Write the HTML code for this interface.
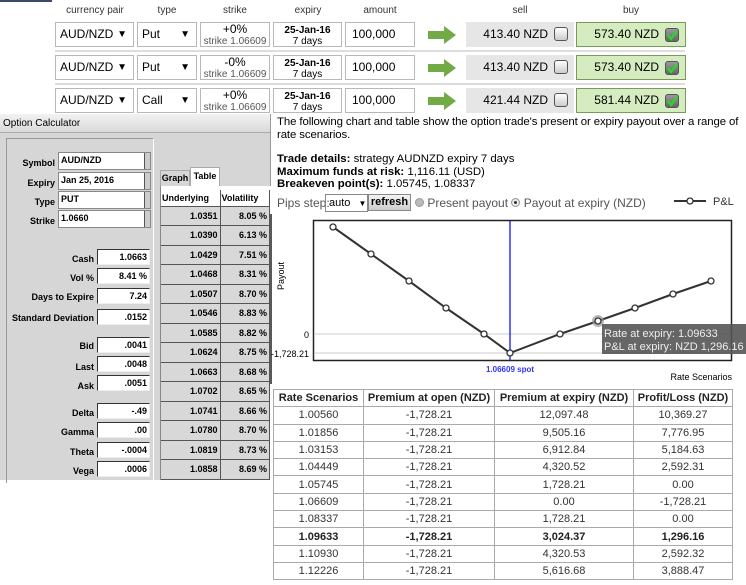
<!DOCTYPE html>
<html><head><meta charset="utf-8"><style>
*{margin:0;padding:0;box-sizing:border-box}
body{width:746px;height:585px;position:relative;background:#fff;font-family:"Liberation Sans",Arial,sans-serif;overflow:hidden;color:#000}
.a{position:absolute}
.hd{font-size:10px;color:#333;top:5px;text-align:center}
.box{position:absolute;border:1px solid #b8b8b8;background:#fff;height:25px}
.sel{font-size:12px;line-height:23px;padding-left:4px}
.sel b{position:absolute;right:6px;font-size:10px;font-weight:normal}
.st{text-align:center;font-size:12px;line-height:11px;padding-top:1px}
.st small{font-size:10px;color:#555}
.ex{text-align:center;font-size:10px;line-height:11px;padding-top:2px}
.ex b{font-size:10px}
.amt{font-size:12px;line-height:23px;padding-left:6px}
.sell{position:absolute;background:#e6e6e6;height:25px;font-size:12px;line-height:25px;text-align:right;padding-right:26px}
.buy{position:absolute;background:#d5ecc0;border:1px solid #7a9a5a;height:25px;font-size:12px;line-height:23px;text-align:right;padding-right:26px}
.cb{position:absolute;right:6px;top:5px;width:14px;height:14px;border:1px solid #555;border-radius:3px;background:linear-gradient(#fff,#ccc)}
.sep{position:absolute;left:55px;width:630px;height:2px;background:#ddd}
.calc{font-family:"Liberation Sans",Arial,sans-serif;font-weight:bold;font-size:9px}
.lab{position:absolute;text-align:right;font-weight:bold;font-size:9px}
.fld{position:absolute;background:#fff;border:1px solid #333;border-right-color:#eee;border-bottom-color:#eee;font-size:9px;font-weight:bold;text-align:right;padding-right:2px;height:16px;line-height:14px}
.dd{position:absolute;background:#fff;border:1px solid #888;font-size:9px;font-weight:bold;padding-left:2px;height:18px;line-height:14px}
.dd i{position:absolute;right:0;top:0;width:6px;height:16px;background:#ccc;border-left:1px solid #555}
table.g{border-collapse:collapse;position:absolute;left:161px;top:190px;width:109px;font-size:9px;font-weight:bold}
table.g td{height:19.5px;border-bottom:1px solid #555;border-right:1px solid #555;text-align:right;padding-right:2px;background:#d8d8d8}
table.g tr:first-child td{background:#fff;text-align:left;height:16px;padding-left:1px}
table.r{border-collapse:collapse;position:absolute;left:273px;top:389px;width:460px;font-size:11px;color:#333}
table.r td{border:1px solid #aaa;text-align:center;height:17.3px;padding:0}
table.r tr:first-child td{font-weight:bold;background:#fff;color:#222}
</style></head><body>
<div class="a" style="left:0;top:0;width:52px;height:2px;background:#3a4a6a"></div>
<div class="a hd" style="left:55px;width:80px">currency pair</div>
<div class="a hd" style="left:137px;width:60px">type</div>
<div class="a hd" style="left:200px;width:70px">strike</div>
<div class="a hd" style="left:273px;width:70px">expiry</div>
<div class="a hd" style="left:345px;width:70px">amount</div>
<div class="a hd" style="left:466px;width:108px">sell</div>
<div class="a hd" style="left:576px;width:110px">buy</div>

<div class="box sel" style="left:55px;top:22px;width:79px">AUD/NZD<b>▼</b></div>
<div class="box sel" style="left:137px;top:22px;width:60px">Put<b>▼</b></div>
<div class="box st" style="left:200px;top:22px;width:70px">+0%<br><small>strike 1.06609</small></div>
<div class="box ex" style="left:273px;top:22px;width:69px"><b>25-Jan-16</b><br>7 days</div>
<div class="box amt" style="left:345px;top:22px;width:70px">100,000</div>
<svg class="a" style="left:428px;top:26px" width="28" height="18"><path d="M0 5h16V0l12 9-12 9v-5H0z" fill="#72aa46"/></svg>
<div class="sell" style="left:466px;top:22px;width:108px">413.40 NZD<span class="cb"></span></div>
<div class="buy" style="left:576px;top:22px;width:110px">573.40 NZD<span class="cb" style="background:linear-gradient(#999,#666)"><svg width="12" height="12" style="position:absolute;left:0;top:0"><path d="M2 6l3 4 6-8" stroke="#2d2" stroke-width="2.2" fill="none"/></svg></span></div>
<div class="sep" style="top:50px"></div>

<div class="box sel" style="left:55px;top:55px;width:79px">AUD/NZD<b>▼</b></div>
<div class="box sel" style="left:137px;top:55px;width:60px">Put<b>▼</b></div>
<div class="box st" style="left:200px;top:55px;width:70px">-0%<br><small>strike 1.06609</small></div>
<div class="box ex" style="left:273px;top:55px;width:69px"><b>25-Jan-16</b><br>7 days</div>
<div class="box amt" style="left:345px;top:55px;width:70px">100,000</div>
<svg class="a" style="left:428px;top:59px" width="28" height="18"><path d="M0 5h16V0l12 9-12 9v-5H0z" fill="#72aa46"/></svg>
<div class="sell" style="left:466px;top:55px;width:108px">413.40 NZD<span class="cb"></span></div>
<div class="buy" style="left:576px;top:55px;width:110px">573.40 NZD<span class="cb" style="background:linear-gradient(#999,#666)"><svg width="12" height="12" style="position:absolute;left:0;top:0"><path d="M2 6l3 4 6-8" stroke="#2d2" stroke-width="2.2" fill="none"/></svg></span></div>
<div class="sep" style="top:83px"></div>

<div class="box sel" style="left:55px;top:88px;width:79px">AUD/NZD<b>▼</b></div>
<div class="box sel" style="left:137px;top:88px;width:60px">Call<b>▼</b></div>
<div class="box st" style="left:200px;top:88px;width:70px">+0%<br><small>strike 1.06609</small></div>
<div class="box ex" style="left:273px;top:88px;width:69px"><b>25-Jan-16</b><br>7 days</div>
<div class="box amt" style="left:345px;top:88px;width:70px">100,000</div>
<svg class="a" style="left:428px;top:92px" width="28" height="18"><path d="M0 5h16V0l12 9-12 9v-5H0z" fill="#72aa46"/></svg>
<div class="sell" style="left:466px;top:88px;width:108px">421.44 NZD<span class="cb"></span></div>
<div class="buy" style="left:576px;top:88px;width:110px">581.44 NZD<span class="cb" style="background:linear-gradient(#999,#666)"><svg width="12" height="12" style="position:absolute;left:0;top:0"><path d="M2 6l3 4 6-8" stroke="#2d2" stroke-width="2.2" fill="none"/></svg></span></div>

<div class="a calc" style="left:0;top:114px;width:271px;height:366px;background:#d6d6d6;border-right:1px solid #999">
 <div class="a" style="left:0;top:0;width:270px;height:19px;background:linear-gradient(#f2f2f2,#dadada);border-bottom:1px solid #aaa;font-weight:normal;font-size:10px;line-height:19px;padding-left:3px">Option Calculator</div>
 <div class="a" style="left:6px;top:24px;width:148px;height:345px;border:1px solid #999;border-right-color:#fff;border-bottom:none"></div>
</div>
<div class="lab" style="left:0;top:158px;width:55px">Symbol</div><div class="dd" style="left:58px;top:152px;width:93px">AUD/NZD<i></i></div>
<div class="lab" style="left:0;top:178px;width:55px">Expiry</div><div class="dd" style="left:58px;top:172px;width:93px">Jan 25, 2016<i></i></div>
<div class="lab" style="left:0;top:197px;width:55px">Type</div><div class="dd" style="left:58px;top:191px;width:93px">PUT<i></i></div>
<div class="lab" style="left:0;top:216px;width:55px">Strike</div><div class="dd" style="left:58px;top:210px;width:93px">1.0660<i></i></div>
<div class="lab" style="left:0;top:254px;width:94px">Cash</div><div class="fld" style="left:97px;top:249px;width:53px">1.0663</div>
<div class="lab" style="left:0;top:273px;width:94px">Vol %</div><div class="fld" style="left:97px;top:268px;width:53px">8.41 %</div>
<div class="lab" style="left:0;top:292px;width:94px">Days to Expire</div><div class="fld" style="left:97px;top:288px;width:53px">7.24</div>
<div class="lab" style="left:0;top:313px;width:94px">Standard Deviation</div><div class="fld" style="left:97px;top:309px;width:53px">.0152</div>
<div class="lab" style="left:0;top:341px;width:94px">Bid</div><div class="fld" style="left:97px;top:337px;width:53px">.0041</div>
<div class="lab" style="left:0;top:362px;width:94px">Last</div><div class="fld" style="left:97px;top:356px;width:53px">.0048</div>
<div class="lab" style="left:0;top:381px;width:94px">Ask</div><div class="fld" style="left:97px;top:375px;width:53px">.0051</div>
<div class="lab" style="left:0;top:408px;width:94px">Delta</div><div class="fld" style="left:97px;top:403px;width:53px">-.49</div>
<div class="lab" style="left:0;top:427px;width:94px">Gamma</div><div class="fld" style="left:97px;top:422px;width:53px">.00</div>
<div class="lab" style="left:0;top:447px;width:94px">Theta</div><div class="fld" style="left:97px;top:442px;width:53px">-.0004</div>
<div class="lab" style="left:0;top:466px;width:94px">Vega</div><div class="fld" style="left:97px;top:461px;width:53px">.0006</div>
<div class="a" style="left:160px;top:170px;width:30px;height:16px;border:1px solid #aaa;border-bottom:none;font-size:9px;font-weight:bold;text-align:center;line-height:15px">Graph</div>
<div class="a" style="left:190px;top:167px;width:30px;height:19px;background:#fff;border:1px solid #aaa;border-bottom:none;font-size:9px;font-weight:bold;text-align:center;line-height:17px">Table</div>
<div class="a" style="left:160px;top:186px;width:111px;height:294px;background:#fff;border-left:1px solid #888"></div>
<table class="g">
<tr><td style="width:59px">Underlying</td><td>Volatility</td></tr>
<tr><td>1.0351</td><td>8.05 %</td></tr><tr><td>1.0390</td><td>6.13 %</td></tr><tr><td>1.0429</td><td>7.51 %</td></tr><tr><td>1.0468</td><td>8.31 %</td></tr><tr><td>1.0507</td><td>8.70 %</td></tr><tr><td>1.0546</td><td>8.83 %</td></tr><tr><td>1.0585</td><td>8.82 %</td></tr><tr><td>1.0624</td><td>8.75 %</td></tr><tr><td>1.0663</td><td>8.68 %</td></tr><tr><td>1.0702</td><td>8.65 %</td></tr><tr><td>1.0741</td><td>8.66 %</td></tr><tr><td>1.0780</td><td>8.70 %</td></tr><tr><td>1.0819</td><td>8.73 %</td></tr><tr><td>1.0858</td><td>8.69 %</td></tr>
</table>

<div class="a" style="left:277px;top:116px;width:469px;font-size:11.4px;line-height:13px;letter-spacing:-0.1px">The following chart and table show the option trade's present or expiry payout over a range of rate scenarios.</div>
<div class="a" style="left:277px;top:153px;font-size:11.4px;line-height:12.5px"><b>Trade details:</b> strategy AUDNZD expiry 7 days<br><b>Maximum funds at risk:</b> 1,116.11 (USD)<br><b>Breakeven point(s):</b> 1.05745, 1.08337</div>
<div class="a" style="left:277px;top:196px;font-size:12px;color:#555">Pips step:</div>
<div class="a" style="left:325px;top:194px;width:43px;height:18px;border:1px solid #888;font-size:11px;line-height:16px;padding-left:3px">auto <span style="font-size:8px;margin-left:5px">▼</span></div>
<div class="a" style="left:368px;top:194px;width:43px;height:17px;border:1px solid #888;background:linear-gradient(#f4f4f4,#ccc);font-size:11px;font-weight:bold;text-align:center;line-height:15px">refresh</div>
<div class="a" style="left:415px;top:196px;font-size:12px;color:#555"><span style="display:inline-block;width:9px;height:9px;border-radius:50%;background:#bbb;border:1px solid #999"></span> Present payout <span style="display:inline-block;width:9px;height:9px;border-radius:50%;background:#ddd;border:1px solid #999;box-shadow:inset 0 0 0 2px #eee,inset 0 0 0 4px #333"></span> Payout at expiry (NZD)</div>
<svg class="a" style="left:674px;top:195px" width="72" height="14"><line x1="0" y1="6" x2="32" y2="6" stroke="#333" stroke-width="2"/><circle cx="16" cy="6" r="3" fill="#fff" stroke="#333" stroke-width="1.3"/><text x="39" y="10" font-size="11" font-family="Liberation Sans" fill="#333">P&amp;L</text></svg>

<svg class="a" style="left:270px;top:214px" width="476" height="170">
<line x1="1" y1="0" x2="1" y2="170" stroke="#222" stroke-width="1.5"/>
<rect x="43.5" y="6.5" width="418" height="140" fill="#fff" stroke="#222" stroke-width="1.5"/>
<line x1="44" y1="120" x2="461" y2="120" stroke="#ccc"/>
<line x1="44" y1="139" x2="461" y2="139" stroke="#ccc"/>
<text x="39" y="124" font-size="9" text-anchor="end" font-family="Liberation Sans">0</text>
<text x="39" y="143" font-size="9" text-anchor="end" font-family="Liberation Sans">-1,728.21</text>
<text x="0" y="0" font-size="9" font-family="Liberation Sans" transform="translate(14 76) rotate(-90)">Payout</text>
<line x1="240" y1="7" x2="240" y2="146" stroke="#00f" stroke-width="1.2"/>
<polyline points="63,13 101,40 139,67 176,94 214,120 240,139 290,120 328,107 365,94 403,80 441,67" fill="none" stroke="#333" stroke-width="2"/>
<g fill="#fff" stroke="#333" stroke-width="1.3"><circle cx="63" cy="13" r="3"/><circle cx="101" cy="40" r="3"/><circle cx="139" cy="67" r="3"/><circle cx="176" cy="94" r="3"/><circle cx="214" cy="120" r="3"/><circle cx="240" cy="139" r="3"/><circle cx="290" cy="120" r="3"/><circle cx="365" cy="94" r="3"/><circle cx="403" cy="80" r="3"/><circle cx="441" cy="67" r="3"/></g>
<circle cx="328" cy="107" r="6" fill="#999" opacity=".7"/><circle cx="328" cy="107" r="3" fill="#fff" stroke="#333" stroke-width="1.3"/>
<rect x="332" y="110" width="144" height="30" fill="#555" opacity=".9"/>
<text x="334" y="123" font-size="11" fill="#eee" font-family="Liberation Sans">Rate at expiry: 1.09633</text>
<text x="334" y="136" font-size="11" fill="#eee" font-family="Liberation Sans">P&amp;L at expiry: NZD 1,296.16</text>
<text x="240" y="158" font-size="8" fill="#33f" font-weight="bold" text-anchor="middle" font-family="Liberation Sans">1.06609 spot</text>
<text x="462" y="166" font-size="9" text-anchor="end" font-family="Liberation Sans">Rate Scenarios</text>
</svg>

<table class="r">
<tr><td style="width:90px">Rate Scenarios</td><td style="width:131px">Premium at open (NZD)</td><td style="width:139px">Premium at expiry (NZD)</td><td>Profit/Loss (NZD)</td></tr>
<tr><td>1.00560</td><td>-1,728.21</td><td>12,097.48</td><td>10,369.27</td></tr>
<tr><td>1.01856</td><td>-1,728.21</td><td>9,505.16</td><td>7,776.95</td></tr>
<tr><td>1.03153</td><td>-1,728.21</td><td>6,912.84</td><td>5,184.63</td></tr>
<tr><td>1.04449</td><td>-1,728.21</td><td>4,320.52</td><td>2,592.31</td></tr>
<tr><td>1.05745</td><td>-1,728.21</td><td>1,728.21</td><td>0.00</td></tr>
<tr><td>1.06609</td><td>-1,728.21</td><td>0.00</td><td>-1,728.21</td></tr>
<tr><td>1.08337</td><td>-1,728.21</td><td>1,728.21</td><td>0.00</td></tr>
<tr style="font-weight:bold;color:#222"><td>1.09633</td><td>-1,728.21</td><td>3,024.37</td><td>1,296.16</td></tr>
<tr><td>1.10930</td><td>-1,728.21</td><td>4,320.53</td><td>2,592.32</td></tr>
<tr><td>1.12226</td><td>-1,728.21</td><td>5,616.68</td><td>3,888.47</td></tr>
</table>
</body></html>
